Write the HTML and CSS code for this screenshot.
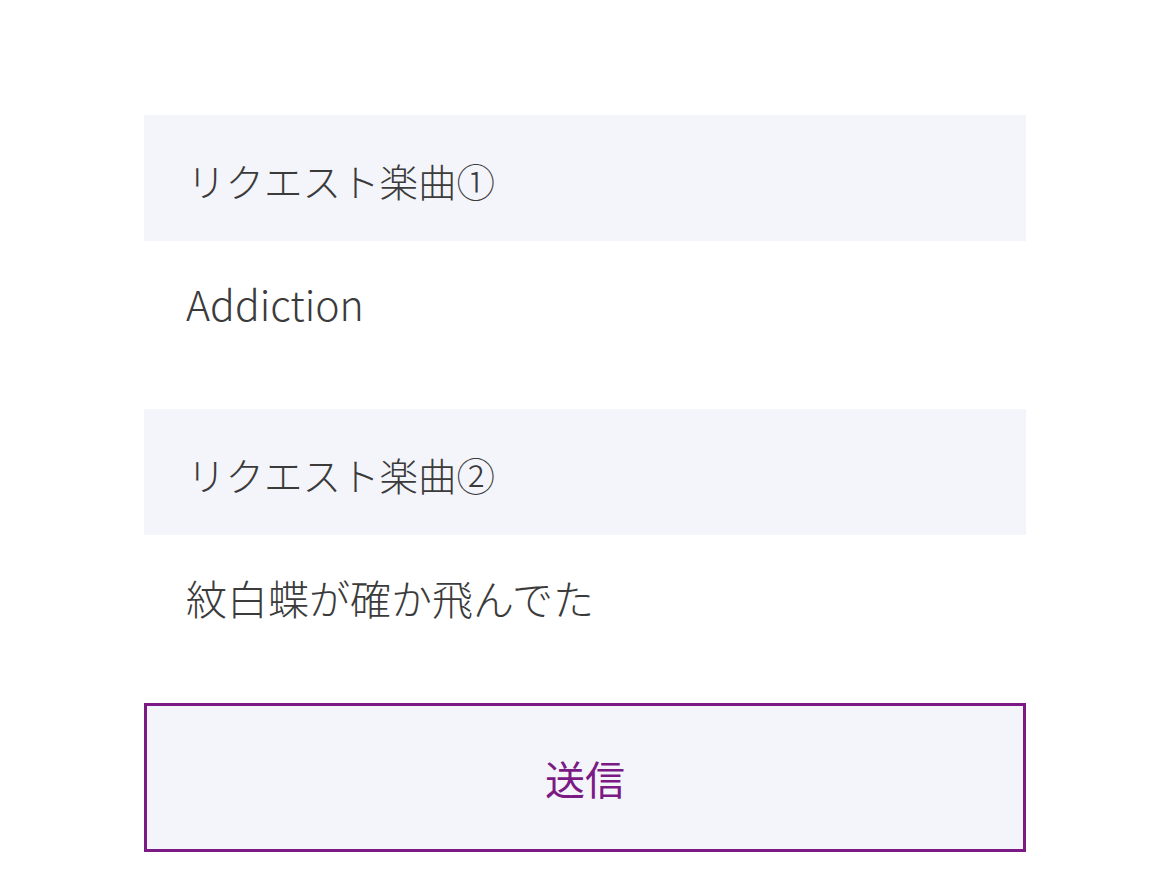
FILE: index.html
```html
<!DOCTYPE html>
<html>
<head>
  <meta charset="utf-8">
  <title>リクエスト確認</title>
  <link rel="stylesheet" href="styles.css">
</head>
<body>
  <form class="confirm">
    <div class="field">
      <div class="field-label">リクエスト楽曲①</div>
      <div class="field-value">Addiction</div>
    </div>
    <div class="field">
      <div class="field-label">リクエスト楽曲②</div>
      <div class="field-value">紋白蝶が確か飛んでた</div>
    </div>
    <button type="button" class="submit">送信</button>
  </form>
</body>
</html>
```

FILE: styles.css
```css
body {
  margin: 0;
  background-color: #fff;
  font-family: "Noto Sans CJK JP", "Noto Sans", sans-serif;
  font-weight: 300;
  color: #3b3b3b;
}

.confirm {
  width: 882px;
  margin: 115px 0 0 144px;
}

.field {
  margin-bottom: 82px;
}

.field-label {
  background-color: #f4f5fa;
  height: 126px;
  line-height: 130px;
  padding-left: 43px;
  font-size: 38.5px;
}

.field-value {
  padding: 38px 42px 0;
  font-size: 41px;
  line-height: 48px;
}

.submit {
  display: block;
  width: 100%;
  height: 149px;
  background-color: #f4f5fa;
  border: 3px solid #7b1a85;
  color: #7b1a85;
  font-family: inherit;
  font-weight: 400;
  font-size: 40px;
  cursor: pointer;
}
```
